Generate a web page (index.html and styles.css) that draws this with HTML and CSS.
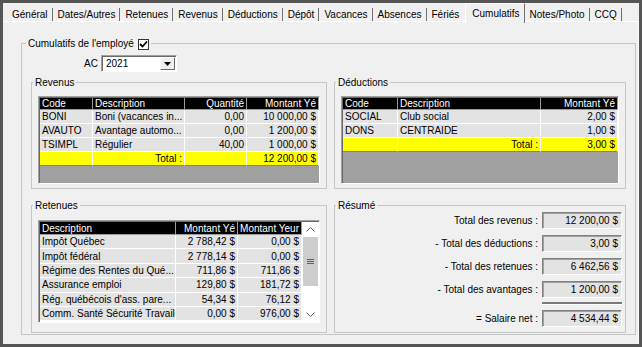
FILE: index.html
```html
<!DOCTYPE html>
<html lang="fr">
<head>
    <meta charset="UTF-8">
    <title>Cumulatifs de l'employé</title>
    <link rel="stylesheet" href="styles.css">
</head>
<body>
    <div class="window">
        <ul class="tabs">
            <li>Général</li>
            <li>Dates/Autres</li>
            <li>Retenues</li>
            <li>Revenus</li>
            <li>Déductions</li>
            <li>Dépôt</li>
            <li>Vacances</li>
            <li>Absences</li>
            <li class="before-active">Fériés</li>
            <li class="active">Cumulatifs</li>
            <li>Notes/Photo</li>
            <li>CCQ</li>
        </ul>

        <div class="panel">
            <fieldset class="group main">
                <legend>Cumulatifs de l'employé
                    <span class="check">
                        <svg width="9" height="9" viewBox="0 0 9 9"><path d="M1 4 L3.5 6.5 L8 1.5" fill="none" stroke="#000" stroke-width="1.8"/></svg>
                    </span>
                </legend>

                <div class="year-row">
                    <label for="year">AC</label>
                    <div class="combo" id="year">
                        <span class="combo-value">2021</span>
                        <span class="combo-btn">
                            <svg width="7" height="4" viewBox="0 0 7 4"><path d="M0 0 H7 L3.5 4 Z" fill="#000"/></svg>
                        </span>
                    </div>
                </div>

                <div class="sections">
                    <!-- Revenus -->
                    <fieldset class="group">
                        <legend>Revenus</legend>
                        <div class="grid filled">
                            <table>
                                <colgroup><col style="width:53px"><col style="width:92px"><col style="width:62px"><col></colgroup>
                                <tr><th>Code</th><th>Description</th><th class="num">Quantité</th><th class="num">Montant Yé</th></tr>
                                <tr><td>BONI</td><td>Boni (vacances in...</td><td class="num">0,00</td><td class="num">10 000,00 $</td></tr>
                                <tr><td>AVAUTO</td><td>Avantage automo...</td><td class="num">0,00</td><td class="num">1 200,00 $</td></tr>
                                <tr><td>TSIMPL</td><td>Régulier</td><td class="num">40,00</td><td class="num">1 000,00 $</td></tr>
                                <tr class="total"><td></td><td class="num">Total :</td><td></td><td class="num">12 200,00 $</td></tr>
                            </table>
                        </div>
                    </fieldset>

                    <!-- Déductions -->
                    <fieldset class="group">
                        <legend>Déductions</legend>
                        <div class="grid filled">
                            <table>
                                <colgroup><col style="width:55px"><col style="width:143px"><col></colgroup>
                                <tr><th>Code</th><th>Description</th><th class="num">Montant Yé</th></tr>
                                <tr><td>SOCIAL</td><td>Club social</td><td class="num">2,00 $</td></tr>
                                <tr><td>DONS</td><td>CENTRAIDE</td><td class="num">1,00 $</td></tr>
                                <tr class="total"><td></td><td class="num">Total :</td><td class="num">3,00 $</td></tr>
                            </table>
                        </div>
                    </fieldset>

                    <!-- Retenues -->
                    <fieldset class="group retenues">
                        <legend>Retenues</legend>
                        <div class="grid scrolled">
                            <table>
                                <colgroup><col style="width:136px"><col style="width:62px"><col></colgroup>
                                <tr><th>Description</th><th class="num">Montant Yé</th><th class="num">Montant Yeur</th></tr>
                                <tr><td>Impôt Québec</td><td class="num">2 788,42 $</td><td class="num">0,00 $</td></tr>
                                <tr><td>Impôt fédéral</td><td class="num">2 778,14 $</td><td class="num">0,00 $</td></tr>
                                <tr><td>Régime des Rentes du Qué...</td><td class="num">711,86 $</td><td class="num">711,86 $</td></tr>
                                <tr><td>Assurance emploi</td><td class="num">129,80 $</td><td class="num">181,72 $</td></tr>
                                <tr><td>Rég. québécois d'ass. pare...</td><td class="num">54,34 $</td><td class="num">76,12 $</td></tr>
                                <tr><td>Comm. Santé Sécurité Travail</td><td class="num">0,00 $</td><td class="num">976,00 $</td></tr>
                            </table>
                            <div class="vscroll">
                                <span class="arrow">
                                    <svg width="9" height="5" viewBox="0 0 9 5"><path d="M0.5 4.5 L4.5 0.5 L8.5 4.5" fill="none" stroke="#606060"/></svg>
                                </span>
                                <span class="thumb">
                                    <svg width="7" height="7" viewBox="0 0 7 7"><path d="M0 1.5 H7 M0 3.5 H7 M0 5.5 H7" stroke="#606060"/></svg>
                                </span>
                                <span class="track"></span>
                                <span class="arrow">
                                    <svg width="9" height="5" viewBox="0 0 9 5"><path d="M0.5 0.5 L4.5 4.5 L8.5 0.5" fill="none" stroke="#606060"/></svg>
                                </span>
                            </div>
                        </div>
                    </fieldset>

                    <!-- Résumé -->
                    <fieldset class="group">
                        <legend>Résumé</legend>
                        <div class="summary">
                            <span class="label">Total des revenus :</span>
                            <span class="value">12 200,00 $</span>
                            <span class="label">- Total des déductions :</span>
                            <span class="value">3,00 $</span>
                            <span class="label">- Total des retenues :</span>
                            <span class="value">6 462,56 $</span>
                            <span class="label">- Total des avantages :</span>
                            <span class="value">1 200,00 $</span>
                            <span class="rule"></span>
                            <span class="label">= Salaire net :</span>
                            <span class="value">4 534,44 $</span>
                        </div>
                    </fieldset>
                </div>
            </fieldset>
        </div>
    </div>
</body>
</html>
```

FILE: styles.css
```css
body {
    margin: 0;
    font-family: "Liberation Sans", Arial, sans-serif;
    font-size: 10px;
    color: #000;
    background: #fff;
}
.window {
    width: 642px;
    height: 347px;
    box-sizing: border-box;
    border: 3px solid #555;
    background: #f0f0f0;
    display: flex;
    flex-direction: column;
}

/* tab strip */
.tabs {
    display: flex;
    list-style: none;
    margin: 0;
    padding: 0 0 0 3px;
    height: 18px;
    position: relative;
    z-index: 1;
}
.tabs li {
    margin-top: 5px;
    height: 13px;
    line-height: 13px;
    padding: 0 4px 0 5px;
    border-right: 1px solid #6e6e6e;
    white-space: nowrap;
}
.tabs li:first-child {
    padding-left: 6px;
}
.tabs li.before-active {
    border-right: none;
    padding-right: 6px;
}
.tabs li.active {
    margin-top: 0;
    height: 16px;
    padding: 3px 4px 0 6px;
    background: #f0f0f0;
    border-top: 1px solid #fff;
    border-left: 1px solid #fff;
    border-right: 1px solid #6e6e6e;
}

.panel {
    flex: 1;
    border-top: 1px solid #fff;
    border-right: 1px solid #fff;
    padding: 15px 2px 0 18px;
}

/* group boxes */
.group {
    margin: 0;
    border: 1px solid #c6c6c6;
    padding: 0 6px 5px 6px;
    min-width: 0;
}
.group legend {
    padding: 0 1px;
    line-height: 13px;
}
.main {
    padding: 0 8px 1px 9px;
}
.main legend {
    margin-left: -5px;
    padding: 0 2px;
}
.check {
    display: inline-block;
    vertical-align: -2px;
    width: 9px;
    height: 9px;
    margin-left: 1px;
    background: #fff;
    border: 1px solid #333;
    line-height: 0;
}

.year-row {
    display: flex;
    align-items: center;
    margin-top: 5px;
}
.year-row label {
    width: 67px;
    text-align: right;
}
.combo {
    display: flex;
    align-items: center;
    width: 76px;
    height: 17px;
    margin-left: 3px;
    box-sizing: border-box;
    border: 1px solid;
    border-color: #a0a0a0 #fff #fff #a0a0a0;
    box-shadow: inset 1px 1px #696969;
    background: #fff;
}
.combo-value {
    flex: 1;
    padding-left: 4px;
}
.combo-btn {
    display: flex;
    align-items: center;
    justify-content: center;
    width: 15px;
    height: 13px;
    margin-right: 1px;
    box-sizing: border-box;
    border: 1px solid;
    border-color: #fff #696969 #696969 #fff;
    background: #f0f0f0;
}

.sections {
    display: grid;
    grid-template-columns: 296px 292px;
    grid-template-rows: 113px 134px;
    column-gap: 7px;
    row-gap: 10px;
    margin-top: 4px;
}
.sections > .group {
    padding-top: 7px;
}
.sections > .retenues {
    padding-top: 8px;
}

/* list grids */
.grid {
    border: 1px solid;
    border-color: #a0a0a0 #fff #fff #a0a0a0;
    box-shadow: inset 1px 1px #696969;
    padding: 1px 0 0 1px;
}
.grid.filled {
    height: 85px;
    background: #a0a0a0;
}
.grid.scrolled {
    display: flex;
    height: 100px;
    background: #fff;
}
.grid table {
    width: 100%;
    table-layout: fixed;
    border-collapse: separate;
    border-spacing: 0;
    align-self: flex-start;
}
.grid th {
    background: #000;
    color: #fff;
    font-weight: normal;
    text-align: left;
    height: 11px;
    line-height: 11px;
    padding: 0 2px;
    border-right: 1px solid #9a9a9a;
    border-bottom: 1px solid #9a9a9a;
    white-space: nowrap;
    overflow: hidden;
}
.grid.scrolled th {
    height: 12px;
}
.grid td {
    background: #e3e3e3;
    height: 13px;
    line-height: 13px;
    padding: 0 2px;
    border-right: 1px solid #fff;
    border-bottom: 1px solid #fff;
    white-space: nowrap;
    overflow: hidden;
}
.grid.scrolled td {
    height: 13.4px;
}
.grid .num {
    text-align: right;
}
.grid .total td {
    background: #ffff00;
    border-bottom-color: #808080;
}

.vscroll {
    display: flex;
    flex-direction: column;
    width: 17px;
    flex: none;
    background: #fff;
}
.vscroll .arrow {
    display: flex;
    align-items: center;
    justify-content: center;
    height: 15px;
}
.vscroll .thumb {
    display: flex;
    align-items: center;
    justify-content: center;
    height: 49px;
    margin: 0 1px;
    background: #cdcdcd;
}
.vscroll .track {
    flex: 1;
}

/* summary */
.summary {
    display: grid;
    grid-template-columns: 1fr 80px;
    column-gap: 4px;
    row-gap: 6px;
    align-items: center;
    margin: -7px -3px 0 0;
}
.summary .label {
    text-align: right;
}
.summary .value {
    height: 17px;
    line-height: 15px;
    box-sizing: border-box;
    border: 1px solid;
    border-color: #808080 #fff #fff #808080;
    box-shadow: inset 1px 1px #a0a0a0;
    background: #e3e3e3;
    text-align: right;
    padding-right: 3px;
}
.summary .rule {
    grid-column: 2;
    height: 2px;
    margin: -4px 0 -3px;
    background: #7a7a7a;
    border-bottom: 1px solid #fff;
}
```
